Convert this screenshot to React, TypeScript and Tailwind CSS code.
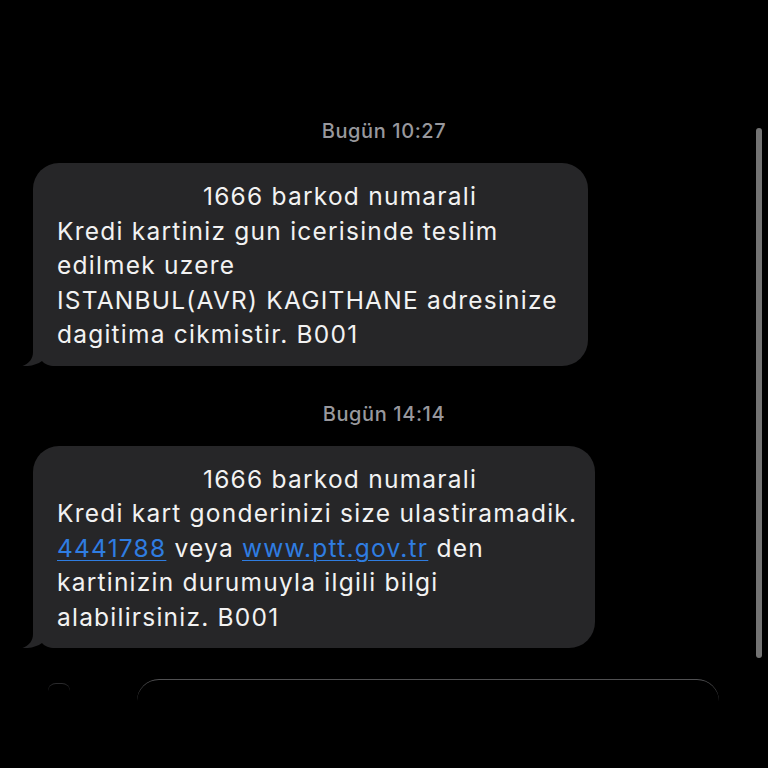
import React from 'react';

const Tail: React.FC = () => (
  <svg
    className="absolute left-[-12px] bottom-0"
    width="40"
    height="30"
    viewBox="0 0 40 30"
  >
    <path
      d="M12,0 L12,16 C12,23 8,27.5 1.5,30 C9,30.6 16,28.6 21,25 C24,28.5 28,30 34,30 L40,30 L40,0 Z"
      fill="#262628"
    />
  </svg>
);

const Stamp: React.FC<{ day: string; time: string }> = ({ day, time }) => (
  <div className="h-[22px] text-center text-[20px] leading-[22px] font-medium tracking-[0.03em] text-[#98989d]">
    {day} {time}
  </div>
);

const Link: React.FC<{ children: React.ReactNode }> = ({ children }) => (
  <span className="text-[#2f7de1] underline decoration-1 underline-offset-[3px]">{children}</span>
);

const App: React.FC = () => {
  return (
    <div
      className="relative h-[768px] w-[768px] overflow-hidden bg-black text-[#f2f2f2]"
      style={{ fontFamily: 'Inter, "Noto Sans", sans-serif' }}
    >
      <div className="flex flex-col pt-[120px]">
        <Stamp day="Bugün" time="10:27" />

        {/* first message */}
        <div className="relative ml-[33px] mt-[21px] w-[555px] rounded-[26px] bg-[#262628] text-[24.5px] leading-[34.5px] tracking-[0.05em]">
          <Tail />
          <div className="relative z-10 pl-[24px] pr-[16px] pt-[16px] pb-[14px]">
            <div className="pl-[146px]">1666 barkod numarali</div>
            <div>Kredi kartiniz gun icerisinde teslim</div>
            <div>edilmek uzere</div>
            <div>ISTANBUL(AVR) KAGITHANE adresinize</div>
            <div>dagitima cikmistir. B001</div>
          </div>
        </div>

        <div className="mt-[37px]">
          <Stamp day="Bugün" time="14:14" />
        </div>

        {/* second message */}
        <div className="relative ml-[33px] mt-[21px] w-[562px] rounded-[26px] bg-[#262628] text-[24.5px] leading-[34.5px] tracking-[0.05em]">
          <Tail />
          <div className="relative z-10 pl-[24px] pr-[12px] pt-[16px] pb-[14px]">
            <div className="pl-[146px]">1666 barkod numarali</div>
            <div className="whitespace-nowrap">Kredi kart gonderinizi size ulastiramadik.</div>
            <div>
              <Link>4441788</Link> veya <Link>www.ptt.gov.tr</Link> den
            </div>
            <div>kartinizin durumuyla ilgili bilgi</div>
            <div>alabilirsiniz. B001</div>
          </div>
        </div>

        {/* input bar edge, mostly hidden */}
        <div className="mt-[31px] flex items-start">
          <div className="ml-[48px] mt-[4px] h-[8px] w-[22px] rounded-t-full border-t border-[#2a2a2c]" />
          <div className="ml-[67px] h-[40px] w-[582px] rounded-t-[22px] border-t border-[#505052]" />
        </div>
      </div>

      {/* scroll indicator */}
      <div className="absolute left-[756px] top-[128px] h-[530px] w-[6px] rounded-full bg-[#737373]" />
    </div>
  );
};

export default App;
